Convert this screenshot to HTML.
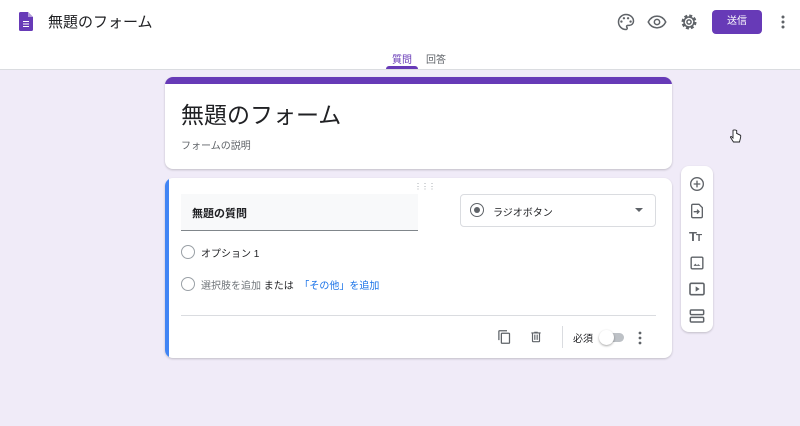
<!DOCTYPE html>
<html><head><meta charset="utf-8"><style>
*{box-sizing:border-box;margin:0;padding:0}
body{width:800px;height:426px;overflow:hidden;background:#f0ebf8;font-family:"Liberation Sans","Noto Sans CJK JP",sans-serif;position:relative;color:#202124}
.hdr{position:absolute;left:0;top:0;width:800px;height:70px;background:#fff;border-bottom:1px solid #dadce0}
.abs{position:absolute}
.card{position:absolute;background:#fff;border-radius:8px;box-shadow:0 1px 2px rgba(0,0,0,.2)}
.rad{position:absolute;width:14px;height:14px;border:1.5px solid #9aa0a6;border-radius:50%}
svg{position:absolute}
</style></head><body>
<div class="hdr">
 <svg style="left:19px;top:12px" width="14" height="19" viewBox="0 0 14 19"><path d="M0 1.5Q0 0 1.5 0H9L14 5V17.5Q14 19 12.5 19H1.5Q0 19 0 17.5Z" fill="#673ab7"/><path d="M9 0V5H14Z" fill="#b39ddb"/><rect x="4" y="9" width="6" height="1" fill="#fff"/><rect x="4" y="11.5" width="6" height="1" fill="#fff"/><rect x="4" y="14" width="6" height="1" fill="#fff"/></svg>
 <div class="abs" style="left:48px;top:11px;font-size:15px;">無題のフォーム</div>
 <svg style="left:616px;top:12px" width="20" height="20" viewBox="0 0 24 24"><path d="M12 3a9 9 0 0 0 0 18c.8 0 1.5-.7 1.5-1.5 0-.4-.1-.7-.4-1-.2-.3-.4-.6-.4-1 0-.8.7-1.5 1.5-1.5H16a5 5 0 0 0 5-5c0-4.4-4-8-9-8z" fill="none" stroke="#5f6368" stroke-width="1.8"/><circle cx="6.5" cy="11.5" r="1.4" fill="#5f6368"/><circle cx="9.5" cy="7.5" r="1.4" fill="#5f6368"/><circle cx="14.5" cy="7.5" r="1.4" fill="#5f6368"/><circle cx="17.5" cy="11.5" r="1.4" fill="#5f6368"/></svg>
 <svg style="left:647px;top:12px" width="20" height="20" viewBox="0 0 24 24"><path d="M1.5 12C4 7 8 5 12 5s8 2 10.5 7c-2.5 5-6.5 7-10.5 7S4 17 1.5 12z" fill="none" stroke="#5f6368" stroke-width="1.8"/><circle cx="12" cy="12" r="3.2" fill="none" stroke="#5f6368" stroke-width="1.8"/></svg>
 <svg style="left:679px;top:12px" width="20" height="20" viewBox="0 0 24 24"><circle cx="12" cy="12" r="7" fill="none" stroke="#5f6368" stroke-width="4" stroke-dasharray="3.3 2.2"/><circle cx="12" cy="12" r="6" fill="none" stroke="#5f6368" stroke-width="1.8"/><circle cx="12" cy="12" r="2.5" fill="none" stroke="#5f6368" stroke-width="1.8"/></svg>
 <div class="abs" style="left:712px;top:10px;width:50px;height:24px;background:#673ab7;border-radius:4px;color:#fff;font-size:10px;text-align:center;line-height:24px">送信</div>
 <svg style="left:780px;top:14px" width="6" height="16"><circle cx="3" cy="3" r="1.5" fill="#5f6368"/><circle cx="3" cy="8" r="1.5" fill="#5f6368"/><circle cx="3" cy="13" r="1.5" fill="#5f6368"/></svg>
 <div class="abs" style="left:392px;top:51px;font-size:10px;color:#673ab7">質問</div>
 <div class="abs" style="left:426px;top:51px;font-size:10px;color:#5f6368">回答</div>
 <div class="abs" style="left:386px;top:66px;width:32px;height:3px;background:#673ab7;border-radius:3px 3px 0 0"></div>
</div>
<div class="card" style="left:165px;top:77px;width:507px;height:92px;overflow:hidden">
 <div class="abs" style="left:0;top:0;width:507px;height:7px;background:#673ab7"></div>
 <div class="abs" style="left:16px;top:19px;font-size:23px">無題のフォーム</div>
 <div class="abs" style="left:16px;top:60px;font-size:10px;color:#5f6368">フォームの説明</div>
</div>
<div class="card" style="left:165px;top:178px;width:507px;height:180px;overflow:hidden">
 <div class="abs" style="left:0;top:0;width:4px;height:180px;background:#4285f4"></div>
 <div class="abs" style="left:249px;top:4px;font-size:8px;color:#9aa0a6;letter-spacing:-1px">⋮⋮⋮</div>
 <div class="abs" style="left:16px;top:16px;width:237px;height:37px;background:#f8f9fa;border-bottom:1px solid #80868b"></div>
 <div class="abs" style="left:27px;top:27px;font-size:11px;font-weight:bold">無題の質問</div>
 <div class="abs" style="left:295px;top:16px;width:196px;height:33px;border:1px solid #dadce0;border-radius:4px"></div>
 <div class="rad" style="left:305px;top:25px;border-color:#5f6368;border-width:1.5px"></div>
 <div class="abs" style="left:309px;top:29px;width:6px;height:6px;border-radius:50%;background:#5f6368"></div>
 <div class="abs" style="left:328px;top:26px;font-size:10px">ラジオボタン</div>
 <svg style="left:470px;top:30px" width="8" height="5"><path d="M0 0L4 4L8 0Z" fill="#5f6368"/></svg>
 <div class="rad" style="left:16px;top:67px"></div>
 <div class="abs" style="left:36px;top:67px;font-size:10px">オプション 1</div>
 <div class="rad" style="left:16px;top:99px"></div>
 <div class="abs" style="left:36px;top:99px;font-size:10px;color:#70757a">選択肢を追加 <span style="color:#202124">または</span>&nbsp;&nbsp;<span style="color:#1a73e8">「その他」を追加</span></div>
 <div class="abs" style="left:16px;top:137px;width:475px;height:1px;background:#dadce0"></div>
 <svg style="left:332px;top:151px" width="15" height="16" viewBox="0 0 24 24"><path d="M16 1H4a2 2 0 0 0-2 2v14h2V3h12zm3 4H8a2 2 0 0 0-2 2v14a2 2 0 0 0 2 2h11a2 2 0 0 0 2-2V7a2 2 0 0 0-2-2zm0 16H8V7h11z" fill="#5f6368"/></svg>
 <svg style="left:364px;top:151px" width="14" height="16" viewBox="0 0 24 24"><path d="M15 4V3H9v1H4v2h1v13a2 2 0 0 0 2 2h10a2 2 0 0 0 2-2V6h1V4zm2 15H7V6h10zM9 8h2v9H9zm4 0h2v9h-2z" fill="#5f6368"/></svg>
 <div class="abs" style="left:397px;top:148px;width:1px;height:22px;background:#dadce0"></div>
 <div class="abs" style="left:408px;top:152px;font-size:10px">必須</div>
 <div class="abs" style="left:437px;top:155px;width:22px;height:9px;border-radius:5px;background:#bdc1c6"></div>
 <div class="abs" style="left:434px;top:152px;width:15px;height:15px;border-radius:50%;background:#fff;box-shadow:0 1px 2px rgba(0,0,0,.35)"></div>
 <svg style="left:472px;top:152px" width="6" height="16"><circle cx="3" cy="3" r="1.4" fill="#5f6368"/><circle cx="3" cy="8" r="1.4" fill="#5f6368"/><circle cx="3" cy="13" r="1.4" fill="#5f6368"/></svg>
</div>
<div class="card" style="left:681px;top:166px;width:32px;height:166px">
 <svg style="left:8px;top:10px" width="16" height="16" viewBox="0 0 24 24"><circle cx="12" cy="12" r="9.5" fill="none" stroke="#5f6368" stroke-width="2"/><path d="M12 7v10M7 12h10" stroke="#5f6368" stroke-width="2"/></svg>
 <svg style="left:9px;top:37px" width="14" height="16" viewBox="0 0 20 24"><path d="M4 2h9l5 5v13a2 2 0 0 1-2 2H4a2 2 0 0 1-2-2V4a2 2 0 0 1 2-2z" fill="none" stroke="#5f6368" stroke-width="2"/><path d="M5 13h8M10 10l3 3-3 3" fill="none" stroke="#5f6368" stroke-width="2"/></svg>
 <div class="abs" style="left:8px;top:63px;font-size:13px;font-weight:bold;color:#5f6368;letter-spacing:-1px">T<span style="font-size:10px">T</span></div>
 <svg style="left:9px;top:90px" width="14" height="14" viewBox="0 0 24 24"><rect x="2" y="2" width="20" height="20" rx="2" fill="none" stroke="#5f6368" stroke-width="2.4"/><path d="M6 17l3-4 3 3 2-2 4 3z" fill="#5f6368"/></svg>
 <svg style="left:8px;top:116px" width="16" height="14" viewBox="0 0 24 20"><rect x="1.5" y="1.5" width="21" height="17" rx="2" fill="none" stroke="#5f6368" stroke-width="2.4"/><path d="M10 6v8l6-4z" fill="#5f6368"/></svg>
 <svg style="left:8px;top:142px" width="16" height="16" viewBox="0 0 24 24"><rect x="2" y="3" width="20" height="7" rx="1.5" fill="none" stroke="#5f6368" stroke-width="2.2"/><rect x="2" y="14" width="20" height="7" rx="1.5" fill="none" stroke="#5f6368" stroke-width="2.2"/></svg>
</div>
<svg style="left:730px;top:129px" width="12" height="14" viewBox="0 0 12 14"><path d="M3 1.5v7.5l-1.5-1.3c-.6-.5-1.3.2-.9.8L3.5 13h6l1.2-5V6.5c0-.6-1-.6-1 0V6c0-.6-1-.6-1 0v-.5c0-.6-1-.6-1 0V5c0-.6-1-.6-1 0V1.5C5.2.8 3 .8 3 1.5z" fill="#fff" stroke="#202124" stroke-width=".9"/></svg>
</body></html>
